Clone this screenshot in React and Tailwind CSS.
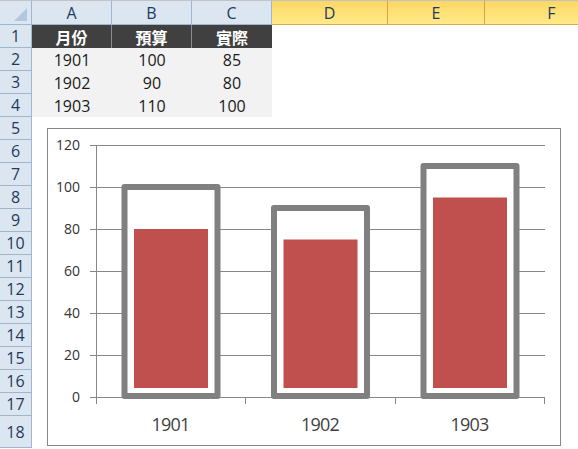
import React from "react";

const COLS = [
	{ name: "A", hi: false },
	{ name: "B", hi: false },
	{ name: "C", hi: false },
	{ name: "D", hi: true },
	{ name: "E", hi: true },
	{ name: "F", hi: true }
];

const HEAD = ["月份", "預算", "實際"];
const DATA = [
	["1901", "100", "85"],
	["1902", "90", "80"],
	["1903", "110", "100"]
];

// chart drawn in page pixels (viewBox starts at the chart box corner)
const ZERO = 397;
const STEP = 2.1;
const BARS = [
	{ label: "1901", cx: 171, budget: 100, actual: 85 },
	{ label: "1902", cx: 320.5, budget: 90, actual: 80 },
	{ label: "1903", cx: 470, budget: 110, actual: 100 }
];

function Chart() {
	const ticks = [0, 20, 40, 60, 80, 100, 120];
	return (
		<div className="absolute left-[47px] top-[128px] h-[318px] w-[514px] border border-[#878787] bg-white">
			<svg
				width="512"
				height="316"
				viewBox="48 129 512 316"
				className="block"
				style={{ fontFamily: '"Open Sans", sans-serif' }}
			>
				{ticks.map((t) => {
					const y = ZERO - t * STEP + 0.5;
					return (
						<g key={t}>
							<line x1="90" x2="545" y1={y} y2={y} stroke="#878787" strokeWidth="1" />
							<text
								x="80"
								y={y + 0.5}
								textAnchor="end"
								dominantBaseline="middle"
								fontSize="14"
								fill="#333333"
							>
								{t}
							</text>
						</g>
					);
				})}
				<line x1="96.5" x2="96.5" y1="145" y2="404" stroke="#878787" strokeWidth="1" />
				{[245.5, 395.5, 544.5].map((x) => (
					<line key={x} x1={x} x2={x} y1="397" y2="404" stroke="#878787" strokeWidth="1" />
				))}
				{BARS.map((b) => {
					const top = ZERO - b.budget * STEP;
					const redTop = ZERO - (b.actual - 5) * STEP;
					return (
						<g key={b.label}>
							<rect
								x={b.cx - 46.5}
								y={top}
								width="93"
								height={ZERO - top - 1}
								fill="#ffffff"
								stroke="#808080"
								strokeWidth="6"
								strokeLinejoin="round"
							/>
							<rect x={b.cx - 37} y={redTop} width="74" height={388 - redTop} fill="#c0504d" />
							<text
								x={b.cx - 0.5}
								y="426"
								textAnchor="middle"
								dominantBaseline="middle"
								fontSize="18"
								letterSpacing="-0.8"
								fill="#3f3f3f"
							>
								{b.label}
							</text>
						</g>
					);
				})}
			</svg>
		</div>
	);
}

function App() {
	const rows = Array.from({ length: 18 }, (_, i) => i + 1);
	return (
		<div
			className="relative h-[449px] w-full overflow-hidden bg-white"
			style={{ fontFamily: '"Open Sans", "Noto Sans CJK TC", sans-serif' }}
		>
			<div className="grid grid-cols-[32px_80px_80px_80px_116px_97px_134px] grid-rows-[25px_repeat(17,23px)_32px]">
				{/* corner */}
				<div className="relative border-t border-r border-b border-t-[#c3c3c3] border-r-[#9eb6ce] border-b-[#9eb6ce] bg-[#dce6f1]">
					<div className="absolute right-[4px] bottom-[3px] h-[13px] w-[13px] bg-[#b3c7de] [clip-path:polygon(100%_0,100%_100%,0_100%)]" />
				</div>
				{COLS.map((c) =>
					c.hi ? (
						<div
							key={c.name}
							className="flex items-center justify-center border-t border-r border-b border-t-[#c3c3c3] border-r-[#d9a24e] border-b-[#e0a84c] bg-gradient-to-b from-[#fdd765] to-[#ffeb88] text-[16px] text-[#1e3a5f]"
						>
							{c.name}
						</div>
					) : (
						<div
							key={c.name}
							className="flex items-center justify-center border-t border-r border-b border-t-[#c3c3c3] border-r-[#9eb6ce] border-b-[#9eb6ce] bg-[#dce6f1] text-[16px] text-[#1e3a5f]"
						>
							{c.name}
						</div>
					)
				)}
				{rows.map((r) => (
					<React.Fragment key={r}>
						<div className="flex items-center justify-center border-r border-b border-[#9eb6ce] bg-[#dce6f1] text-[16px] text-[#1e3a5f]">
							{r}
						</div>
						{COLS.map((c, ci) => {
							if (r === 1 && ci < 3) {
								return (
									<div
										key={c.name}
										className={
											"flex items-center justify-center bg-[#404040] text-[16px] font-bold text-white " +
											(ci < 2 ? "border-r border-[#8c8c8c]" : "")
										}
										style={{ fontFamily: '"Noto Sans CJK TC", sans-serif' }}
									>
										{HEAD[ci]}
									</div>
								);
							}
							if (r >= 2 && r <= 4 && ci < 3) {
								return (
									<div
										key={c.name}
										className="flex items-center justify-center bg-[#f2f2f2] text-[16px] text-[#1a1a1a]"
									>
										{DATA[r - 2][ci]}
									</div>
								);
							}
							return <div key={c.name} className="bg-white" />;
						})}
					</React.Fragment>
				))}
			</div>
			<Chart />
		</div>
	);
}

export default App;
